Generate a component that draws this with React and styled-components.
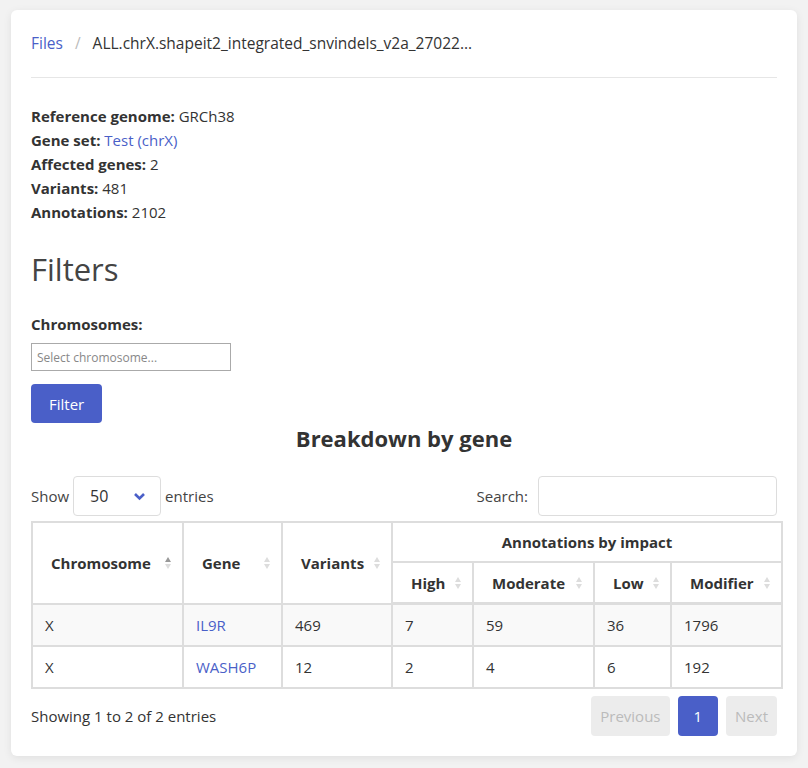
import React from 'react';
import styled, { createGlobalStyle } from 'styled-components';

const GlobalStyle = createGlobalStyle`
  html, body {
    margin: 0;
    padding: 0;
    background: #f2f2f2;
  }
  body {
    font-family: "Open Sans", "Noto Sans", sans-serif;
    color: #333;
    font-size: 15px;
  }
`;

const Page = styled.div`
  padding: 10px 11px 13px 11px;
`;

const Card = styled.div`
  background: #fff;
  border-radius: 6px;
  box-shadow: 0 2px 8px rgba(0, 0, 0, 0.08);
  padding: 20px 20px 20px 20px;
`;

const Breadcrumb = styled.div`
  display: flex;
  align-items: center;
  gap: 12px;
  font-size: 15.5px;
  height: 25px;
  padding-bottom: 22px;
  border-bottom: 1px solid #e6e6e6;
`;

const Link = styled.a`
  color: #4a5fc8;
  text-decoration: none;
`;

const Sep = styled.span`
  color: #bbb;
`;

const Info = styled.div`
  margin-top: 26px;
  line-height: 24px;
`;

const Label = styled.b`
  font-weight: 700;
`;

const Heading = styled.h2`
  font-size: 31px;
  font-weight: 400;
  margin: 25px 0 0;
  line-height: 40px;
  color: #444;
`;

const FieldLabel = styled.div`
  font-weight: 700;
  margin-top: 25px;
`;

const ChromoInput = styled.div`
  height: 26px;
  border: 1px solid #aaa;
  margin-top: 9px;
  font-size: 12px;
  color: #888;
  display: flex;
  align-items: center;
  padding-left: 5px;
  width: 193px;
`;

const Button = styled.button`
  margin-top: 13px;
  background: #4a5fc8;
  color: #fff;
  border: none;
  border-radius: 4px;
  height: 39px;
  padding: 0 18px;
  font: inherit;
  font-size: 15px;
`;

const Title = styled.div`
  text-align: center;
  font-weight: 700;
  font-size: 22px;
  margin-top: 0;
  line-height: 30px;
`;

const Controls = styled.div`
  display: flex;
  justify-content: space-between;
  align-items: center;
  margin-top: 23px;
`;

const Inline = styled.div`
  display: flex;
  align-items: center;
  gap: 4px;
  color: #444;
`;

const SelectBox = styled.div`
  width: 88px;
  height: 40px;
  border: 1px solid #ddd;
  border-radius: 4px;
  display: flex;
  align-items: center;
  justify-content: space-between;
  padding: 0 14px 0 16px;
  box-sizing: border-box;
  color: #333;
  font-size: 16px;
`;

const SearchInput = styled.div`
  width: 239px;
  height: 40px;
  border: 1px solid #ddd;
  border-radius: 4px;
  box-sizing: border-box;
  margin-left: 6px;
`;

const Table = styled.table`
  border-collapse: collapse;
  margin-top: 5px;
  width: 750px;
  table-layout: fixed;
  font-size: 15px;
`;

const Th = styled.th`
  border: 2px solid #ddd;
  padding: 0 10px 0 18px;
  height: ${(p) => p.$h || 38}px;
  text-align: ${(p) => (p.$center ? 'center' : 'left')};
  font-weight: 700;
  color: #333;
  white-space: nowrap;
  border-bottom-width: ${(p) => (p.$last ? 3 : 2)}px;
`;

const ThInner = styled.span`
  display: flex;
  align-items: center;
  justify-content: space-between;
`;

const Tr = styled.tr`
  background: ${(p) => (p.$striped ? '#f9f9f9' : '#fff')};
`;

const Td = styled.td`
  border: 2px solid #ddd;
  padding: 0 12px;
  height: 40px;
  color: #333;
`;

const Footer = styled.div`
  display: flex;
  justify-content: space-between;
  align-items: center;
  margin-top: 7px;
`;

const Pager = styled.div`
  display: flex;
  gap: 8px;
`;

const PageBtn = styled.div`
  height: 40px;
  padding: 0 ${(p) => (p.$active ? 16 : 9)}px;
  display: flex;
  align-items: center;
  border-radius: 4px;
  background: ${(p) => (p.$active ? '#4a5fc8' : '#ececec')};
  color: ${(p) => (p.$active ? '#fff' : '#bbb')};
`;

const SortIcon = ({ asc }) => (
  <svg width="8" height="14" viewBox="0 0 8 14">
    <path d="M4 1 L7 6 L1 6 Z" fill={asc ? '#999' : '#ddd'} />
    <path d="M4 13 L7 8 L1 8 Z" fill="#ddd" />
  </svg>
);

const Chevron = () => (
  <svg width="13" height="9" viewBox="0 0 13 9">
    <path d="M2 2 L6.5 6.5 L11 2" stroke="#4a5fc8" strokeWidth="2.6" fill="none" />
  </svg>
);

const HeadCell = ({ children, asc, ...rest }) => (
  <Th {...rest}>
    <ThInner>
      {children}
      <SortIcon asc={asc} />
    </ThInner>
  </Th>
);

const widths = [151, 99, 110, 81, 121, 77, 111];

const rows = [
  ['X', 'IL9R', '469', '7', '59', '36', '1796'],
  ['X', 'WASH6P', '12', '2', '4', '6', '192'],
];

const App = () => (
  <>
    <GlobalStyle />
    <Page>
      <Card>
        <Breadcrumb>
          <Link href="#">Files</Link>
          <Sep>/</Sep>
          <span>ALL.chrX.shapeit2_integrated_snvindels_v2a_27022…</span>
        </Breadcrumb>
        <Info>
          <div><Label>Reference genome:</Label> GRCh38</div>
          <div><Label>Gene set:</Label> <Link href="#">Test (chrX)</Link></div>
          <div><Label>Affected genes:</Label> 2</div>
          <div><Label>Variants:</Label> 481</div>
          <div><Label>Annotations:</Label> 2102</div>
        </Info>
        <Heading>Filters</Heading>
        <FieldLabel>Chromosomes:</FieldLabel>
        <ChromoInput>Select chromosome...</ChromoInput>
        <Button>Filter</Button>
        <Title>Breakdown by gene</Title>
        <Controls>
          <Inline>
            Show
            <SelectBox>
              <span>50</span>
              <Chevron />
            </SelectBox>
            entries
          </Inline>
          <Inline>
            Search:
            <SearchInput />
          </Inline>
        </Controls>
        <Table>
          <colgroup>
            {widths.map((w, i) => (
              <col key={i} style={{ width: w }} />
            ))}
          </colgroup>
          <thead>
            <tr>
              <HeadCell rowSpan={2} asc>Chromosome</HeadCell>
              <HeadCell rowSpan={2}>Gene</HeadCell>
              <HeadCell rowSpan={2}>Variants</HeadCell>
              <Th colSpan={4} $center style={{ paddingRight: 18 }}>Annotations by impact</Th>
            </tr>
            <tr>
              <HeadCell $h={39} $last>High</HeadCell>
              <HeadCell $h={39} $last>Moderate</HeadCell>
              <HeadCell $h={39} $last>Low</HeadCell>
              <HeadCell $h={39} $last>Modifier</HeadCell>
            </tr>
          </thead>
          <tbody>
            {rows.map((r, i) => (
              <Tr key={r[1]} $striped={i === 0}>
                {r.map((c, j) => (
                  <Td key={j}>{j === 1 ? <Link href="#">{c}</Link> : c}</Td>
                ))}
              </Tr>
            ))}
          </tbody>
        </Table>
        <Footer>
          <span>Showing 1 to 2 of 2 entries</span>
          <Pager>
            <PageBtn>Previous</PageBtn>
            <PageBtn $active>1</PageBtn>
            <PageBtn>Next</PageBtn>
          </Pager>
        </Footer>
      </Card>
    </Page>
  </>
);

export default App;
